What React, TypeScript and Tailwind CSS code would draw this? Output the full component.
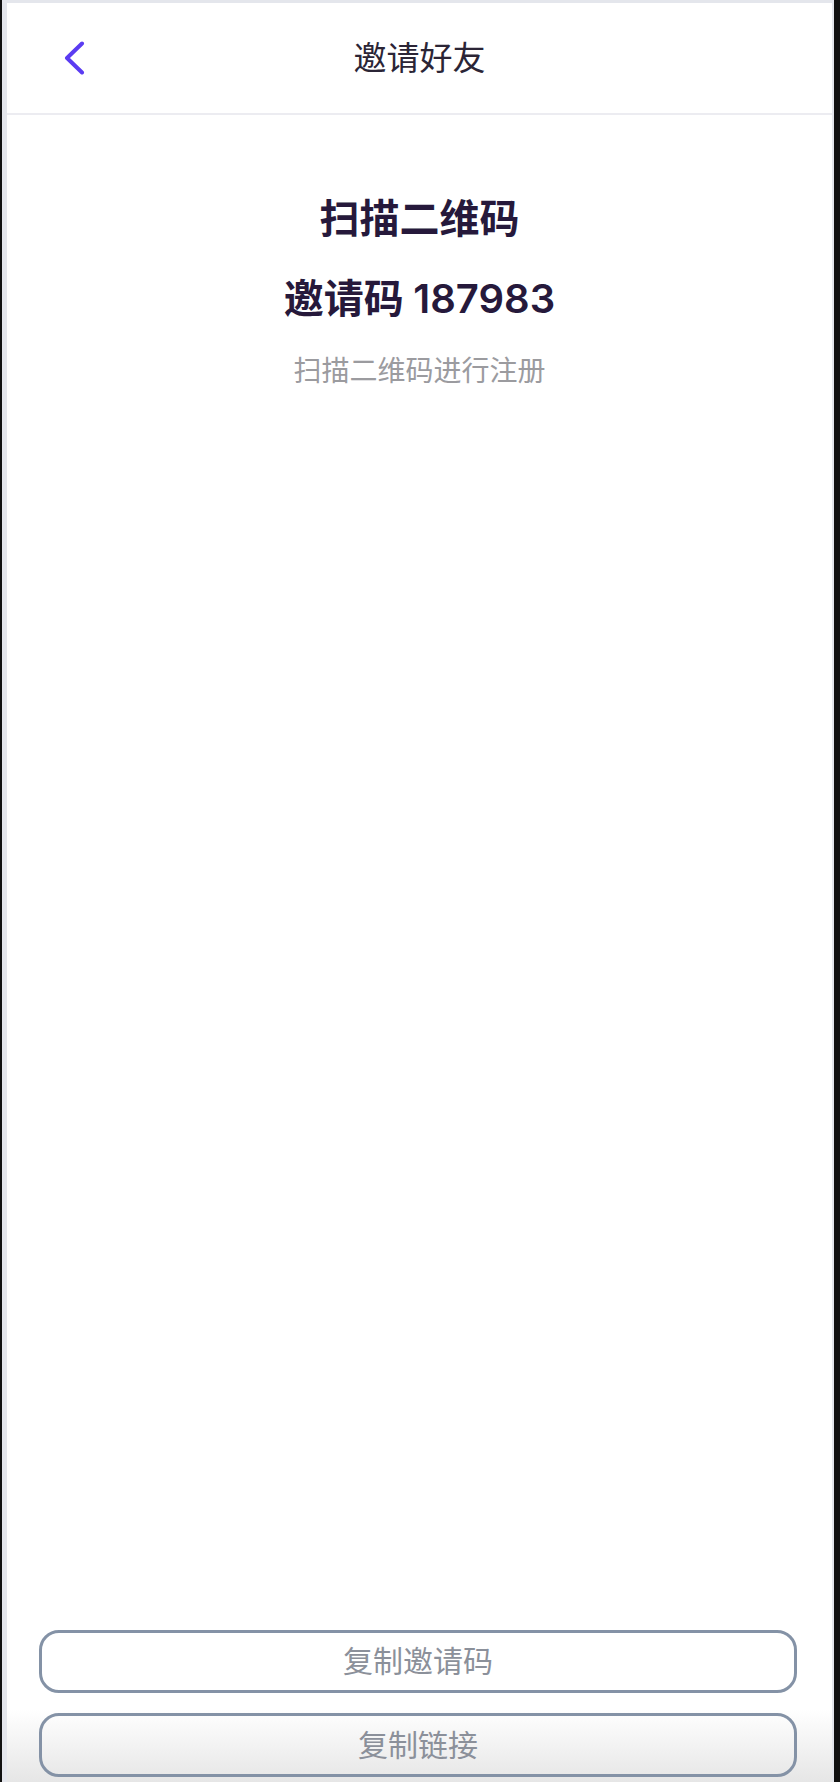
export default function App() {
  return (
    <div className="h-[1782px] w-[840px] bg-[#111111] pl-[2px] pr-[6px] font-['Inter','Noto_Sans_CJK_SC',sans-serif]">
      <div className="flex h-full flex-col border-l-[5px] border-r-[2px] border-t-[3px] border-[#e4e6ec] bg-white">
        {/* Header */}
        <div className="grid h-[112px] shrink-0 grid-cols-[1fr_auto_1fr] items-center border-b-2 border-[#ececf1]">
          <button className="flex items-center pl-[56px]">
            <svg width="22" height="34" viewBox="0 0 22 34" fill="none">
              <path
                d="M19 2.5L4 17L19 31.5"
                stroke="#5b3cf2"
                strokeWidth="4"
                strokeLinecap="round"
                strokeLinejoin="round"
              />
            </svg>
          </button>
          <h1 className="text-[33px] leading-none font-normal text-[#2b2536]">邀请好友</h1>
          <div />
        </div>

        {/* Content */}
        <div className="flex flex-col items-center pt-[76px]">
          <p className="text-[40px] leading-[56px] font-bold text-[#26193b]">扫描二维码</p>
          <p className="mt-[24px] text-[40px] leading-[56px] font-bold text-[#26193b]">
            邀请码 <span className="font-semibold">187983</span>
          </p>
          <p className="mt-[24px] text-[28px] leading-[40px] text-[#9b9b9f]">扫描二维码进行注册</p>
        </div>

        {/* Actions */}
        <div className="mt-auto flex flex-col gap-[20px] bg-linear-to-b from-white from-55% to-[#e6e6e6] pt-[10px] pb-[5px] pl-[32px] pr-[35px]">
          <button className="h-[63px] rounded-[20px] border-[3px] border-[#8492a6] text-[30px] text-[#8b909a]">
            复制邀请码
          </button>
          <button className="h-[64px] rounded-[20px] border-[3px] border-[#8492a6] text-[30px] text-[#8b909a]">
            复制链接
          </button>
        </div>
      </div>
    </div>
  );
}
